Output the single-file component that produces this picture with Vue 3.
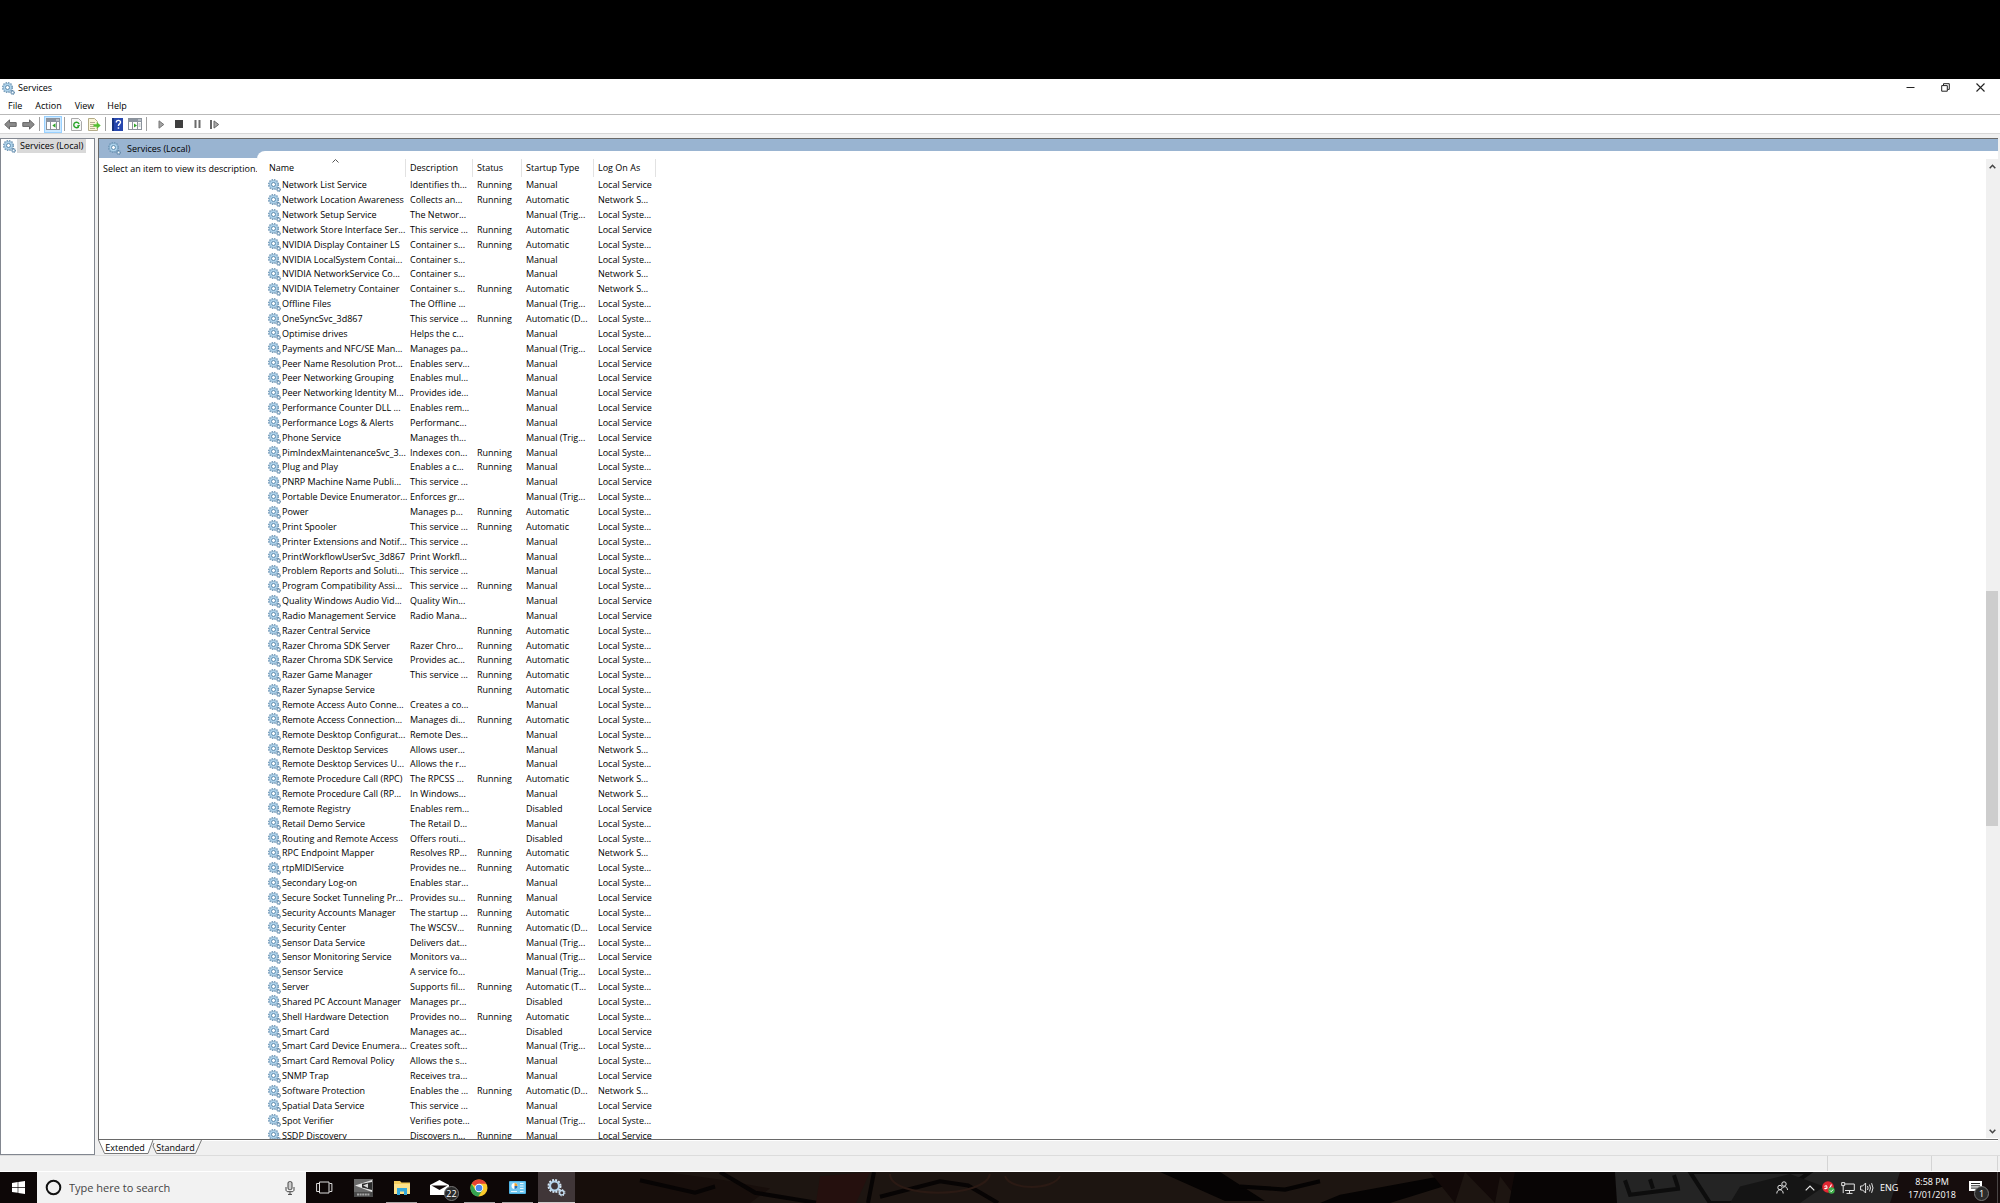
<script setup>
import { ref } from 'vue'

const S = 'Local Service'
const Y = 'Local Syste...'
const N = 'Network S...'
const R = 'Running'
const A = 'Automatic'
const M = 'Manual'
const T = 'Manual (Trig...'

const columns = ['Name', 'Description', 'Status', 'Startup Type', 'Log On As']

const services = [
  ['Network List Service', 'Identifies th...', R, M, S],
  ['Network Location Awareness', 'Collects an...', R, A, N],
  ['Network Setup Service', 'The Networ...', '', T, Y],
  ['Network Store Interface Ser...', 'This service ...', R, A, S],
  ['NVIDIA Display Container LS', 'Container s...', R, A, Y],
  ['NVIDIA LocalSystem Contai...', 'Container s...', '', M, Y],
  ['NVIDIA NetworkService Co...', 'Container s...', '', M, N],
  ['NVIDIA Telemetry Container', 'Container s...', R, A, N],
  ['Offline Files', 'The Offline ...', '', T, Y],
  ['OneSyncSvc_3d867', 'This service ...', R, 'Automatic (D...', Y],
  ['Optimise drives', 'Helps the c...', '', M, Y],
  ['Payments and NFC/SE Man...', 'Manages pa...', '', T, S],
  ['Peer Name Resolution Prot...', 'Enables serv...', '', M, S],
  ['Peer Networking Grouping', 'Enables mul...', '', M, S],
  ['Peer Networking Identity M...', 'Provides ide...', '', M, S],
  ['Performance Counter DLL ...', 'Enables rem...', '', M, S],
  ['Performance Logs & Alerts', 'Performanc...', '', M, S],
  ['Phone Service', 'Manages th...', '', T, S],
  ['PimIndexMaintenanceSvc_3...', 'Indexes con...', R, M, Y],
  ['Plug and Play', 'Enables a c...', R, M, Y],
  ['PNRP Machine Name Publi...', 'This service ...', '', M, S],
  ['Portable Device Enumerator...', 'Enforces gr...', '', T, Y],
  ['Power', 'Manages p...', R, A, Y],
  ['Print Spooler', 'This service ...', R, A, Y],
  ['Printer Extensions and Notif...', 'This service ...', '', M, Y],
  ['PrintWorkflowUserSvc_3d867', 'Print Workfl...', '', M, Y],
  ['Problem Reports and Soluti...', 'This service ...', '', M, Y],
  ['Program Compatibility Assi...', 'This service ...', R, M, Y],
  ['Quality Windows Audio Vid...', 'Quality Win...', '', M, S],
  ['Radio Management Service', 'Radio Mana...', '', M, S],
  ['Razer Central Service', '', R, A, Y],
  ['Razer Chroma SDK Server', 'Razer Chro...', R, A, Y],
  ['Razer Chroma SDK Service', 'Provides ac...', R, A, Y],
  ['Razer Game Manager', 'This service ...', R, A, Y],
  ['Razer Synapse Service', '', R, A, Y],
  ['Remote Access Auto Conne...', 'Creates a co...', '', M, Y],
  ['Remote Access Connection...', 'Manages di...', R, A, Y],
  ['Remote Desktop Configurat...', 'Remote Des...', '', M, Y],
  ['Remote Desktop Services', 'Allows user...', '', M, N],
  ['Remote Desktop Services U...', 'Allows the r...', '', M, Y],
  ['Remote Procedure Call (RPC)', 'The RPCSS ...', R, A, N],
  ['Remote Procedure Call (RP...', 'In Windows...', '', M, N],
  ['Remote Registry', 'Enables rem...', '', 'Disabled', S],
  ['Retail Demo Service', 'The Retail D...', '', M, Y],
  ['Routing and Remote Access', 'Offers routi...', '', 'Disabled', Y],
  ['RPC Endpoint Mapper', 'Resolves RP...', R, A, N],
  ['rtpMIDIService', 'Provides ne...', R, A, Y],
  ['Secondary Log-on', 'Enables star...', '', M, Y],
  ['Secure Socket Tunneling Pr...', 'Provides su...', R, M, S],
  ['Security Accounts Manager', 'The startup ...', R, A, Y],
  ['Security Center', 'The WSCSV...', R, 'Automatic (D...', S],
  ['Sensor Data Service', 'Delivers dat...', '', T, Y],
  ['Sensor Monitoring Service', 'Monitors va...', '', T, S],
  ['Sensor Service', 'A service fo...', '', T, Y],
  ['Server', 'Supports fil...', R, 'Automatic (T...', Y],
  ['Shared PC Account Manager', 'Manages pr...', '', 'Disabled', Y],
  ['Shell Hardware Detection', 'Provides no...', R, A, Y],
  ['Smart Card', 'Manages ac...', '', 'Disabled', S],
  ['Smart Card Device Enumera...', 'Creates soft...', '', T, Y],
  ['Smart Card Removal Policy', 'Allows the s...', '', M, Y],
  ['SNMP Trap', 'Receives tra...', '', M, S],
  ['Software Protection', 'Enables the ...', R, 'Automatic (D...', N],
  ['Spatial Data Service', 'This service ...', '', M, S],
  ['Spot Verifier', 'Verifies pote...', '', T, Y],
  ['SSDP Discovery', 'Discovers n...', R, M, S],
]

const query = ref('')
</script>

<template>
  <div class="screen">
    <svg class="defs" width="0" height="0" aria-hidden="true">
      <symbol id="gears" viewBox="0 0 13 13">
        <circle cx="5.5" cy="5.5" r="4.9" fill="none" stroke="#7299b8" stroke-width="1.3" stroke-dasharray="1.5 1.06" />
        <circle cx="5.5" cy="5.5" r="4.1" fill="#aed3ec" stroke="#7aa3c2" stroke-width=".8" />
        <circle cx="5.5" cy="5.5" r="2" fill="#fff" stroke="#5f8bad" stroke-width="1" />
        <circle cx="10.6" cy="10.4" r="1.8" fill="#a9c8de" stroke="#5d83a3" stroke-width="1.1" stroke-dasharray="1 .4" />
        <circle cx="10.6" cy="10.4" r=".6" fill="#fff" />
      </symbol>
      <symbol id="pane" viewBox="0 0 14 12">
        <rect x=".5" y=".5" width="13" height="11" fill="#fdfdfd" stroke="#8b929b" />
        <path d="M0 1h14v3H0z" fill="#8b949f" />
        <path d="M10 2h3" stroke="#e4e8ec" />
      </symbol>
    </svg>

    <div class="blank"></div>

    <main class="window">
      <header class="titlebar">
        <svg class="gear"><use href="#gears" /></svg>
        <h1>Services</h1>
        <div class="controls">
          <button aria-label="Minimise"><svg width="9" height="9" viewBox="0 0 9 9"><path d="M.5 4.5h8" stroke="#222" /></svg></button>
          <button aria-label="Restore"><svg width="9" height="9" viewBox="0 0 9 9" fill="none" stroke="#222"><path d="M.7 2.6h5.6v5.6H.7zM2.5 2.4V.7h5.8v5.7H6.6" /></svg></button>
          <button aria-label="Close"><svg width="9" height="9" viewBox="0 0 9 9"><path d="M.5.5l8 8M8.500.5l-8 8" stroke="#222" stroke-width="1.100" /></svg></button>
        </div>
      </header>

      <nav class="menu">
        <button>File</button><button>Action</button><button>View</button><button>Help</button>
      </nav>

      <div class="toolbar">
        <button aria-label="Back"><svg width="13" height="11" viewBox="0 0 13 11"><path d="M.7 5.500L5.500.9v2.700h6.700v3.800H5.500v2.700z" fill="#8b8b8b" stroke="#666" /></svg></button>
        <button aria-label="Forward"><svg width="13" height="11" viewBox="0 0 13 11"><path d="M12.300 5.500L7.500.9v2.700H.8v3.800h6.700v2.700z" fill="#8b8b8b" stroke="#666" /></svg></button>
        <i></i>
        <button class="on" aria-label="Show console tree"><svg width="14" height="12" viewBox="0 0 14 12"><use href="#pane" /><path d="M4.500 4v8M10.500 4v8" stroke="#8b929b" /><path d="M9.500 5.300v4.400L6.300 7.500z" fill="#2fa52b" /></svg></button>
        <i></i>
        <button aria-label="Refresh"><svg width="11" height="13" viewBox="0 0 11 13"><path d="M.5.5h7l3 3v9H.5z" fill="#f7f7f7" stroke="#a9a9a9" /><path d="M7.600 8.700A2.700 2.700 0 1 1 8 6" fill="none" stroke="#28a428" stroke-width="1.400" /><path d="M9.400 6.800L5.900 7.400 7.200 9.800z" fill="#28a428" /></svg></button>
        <button aria-label="Export list"><svg width="13" height="13" viewBox="0 0 13 13"><path d="M.5.5h6l3 3v9h-9z" fill="#fbf6d8" stroke="#b3ab87" /><path d="M2 4.500h5M2 6.500h4M2 8.500h4M2 10.500h5" stroke="#a59d7c" stroke-width=".8" /><path d="M5.500 6.300h3.200V4l4 3.500-4 3.500V8.700H5.500z" fill="#55bf32" /></svg></button>
        <i></i>
        <button aria-label="Help"><svg width="11" height="13" viewBox="0 0 11 13"><path d="M0 0h11v13H0z" fill="#2747ae" /><path d="M0 0h2v13H0z" fill="#16317e" /><path d="M4.300 4.500c0-3 4.200-2.700 4.200-.3 0 1.700-2.100 1.700-2.100 3.900" fill="none" stroke="#fff" stroke-width="1.400" /><path d="M5.700 9.300h1.500v1.500H5.700z" fill="#fff" /></svg></button>
        <button aria-label="Show action pane"><svg width="14" height="12" viewBox="0 0 14 12"><use href="#pane" /><path d="M4.500 4v8M9.500 4v8" stroke="#8b929b" /><path d="M6 5.500v4l3-2z" fill="#2fa52b" /><path d="M10.500 6h2M10.500 8h2" stroke="#9aa" /></svg></button>
        <i></i>
        <button class="run" aria-label="Start service"><svg width="7" height="9" viewBox="0 0 7 9"><path d="M1 .8v7.400l4.800-3.700z" fill="#a4a4a4" stroke="#777" /></svg></button>
        <button aria-label="Stop service"><svg width="8" height="8"><path d="M0 0h8v8H0z" fill="#3f3f3f" /></svg></button>
        <button aria-label="Pause service"><svg width="7" height="8"><path d="M.5 0h2v8h-2zM4.500 0h2v8h-2z" fill="#6b6b6b" /></svg></button>
        <button aria-label="Restart service"><svg width="10" height="9" viewBox="0 0 10 9"><path d="M0 0h2v9H0z" fill="#666" /><path d="M4 .9v7.200l4.700-3.600z" fill="#a8a8a8" stroke="#666" /></svg></button>
      </div>

      <div class="panes">
        <aside class="tree">
          <a href="#local"><svg class="gear"><use href="#gears" /></svg><span>Services (Local)</span></a>
        </aside>

        <section class="result">
          <div class="view">
            <div class="detail">
              <h2><svg class="gear"><use href="#gears" /></svg>Services (Local)</h2>
              <p>Select an item to view its description.</p>
            </div>
            <div class="list">
              <table>
                <thead>
                  <tr>
                    <th v-for="(c, i) in columns" :key="c">
                      {{ c }}
                      <svg v-if="i === 0" class="sort" width="7" height="4" viewBox="0 0 7 4"><path d="M.5 3.500l3-3 3 3" fill="none" stroke="#555" /></svg>
                    </th>
                  </tr>
                </thead>
                <tbody>
                  <tr v-for="s in services" :key="s[0]">
                    <td><svg class="gear"><use href="#gears" /></svg>{{ s[0] }}</td>
                    <td>{{ s[1] }}</td>
                    <td>{{ s[2] }}</td>
                    <td>{{ s[3] }}</td>
                    <td>{{ s[4] }}</td>
                  </tr>
                </tbody>
              </table>
              <div class="scroll">
                <button aria-label="Scroll up"><svg width="7" height="5" viewBox="0 0 7 5"><path d="M.7 4.300l2.800-3 2.800 3" fill="none" stroke="#444" stroke-width="1.500" /></svg></button>
                <div class="track"><div class="thumb"></div></div>
                <button aria-label="Scroll down"><svg width="7" height="5" viewBox="0 0 7 5"><path d="M.7.7l2.800 3 2.800-3" fill="none" stroke="#444" stroke-width="1.500" /></svg></button>
              </div>
            </div>
          </div>
          <div class="tabs">
            <button class="first"><svg width="56" height="15" viewBox="0 0 56 15"><path d="M0 0l6 14h44l5-14z" fill="#fff" /><path d="M.5 0l6 13.500h43.500L55 0" fill="none" stroke="#777" /></svg><span>Extended</span></button>
            <button><svg width="50" height="15" viewBox="0 0 50 15"><path d="M1.500.5h48l-6 13h-39L1.500 6z" fill="#f6f6f6" /><path d="M2 3L1 6l3.500 7.500h39l6-13.500" fill="none" stroke="#777" /></svg><span>Standard</span></button>
          </div>
        </section>
      </div>

      <footer class="status"><span class="message"></span><span class="mid"></span><span class="end"></span></footer>
    </main>

    <div class="taskbar">
      <svg class="wallpaper" viewBox="0 0 2000 30" preserveAspectRatio="none" aria-hidden="true">
        <path d="M0 0h2000v30H0z" fill="#0d0707" />
        <path d="M575 0h1045v30H575z" fill="#1d1511" />
        <path d="M575 0h90l60 8 45 8-20 14H575z" fill="#170e0b" />
        <path d="M640 8l55 12 20-6M720 0l35 20 63 10M868 30l6-30M880 24l60-15 28 4 30 17" fill="none" stroke="#070404" stroke-width="4" />
        <path d="M820 4l50-4-14 30h-40z" fill="#25100e" />
        <path d="M890 2c0 24 95 24 100 0M1005 4c5 14 48 14 55 0" fill="none" stroke="#2b1a14" stroke-width="2" />
        <path d="M1160 0h60l45 28h-40zM1340 22l95-17 25-5v9l-70 21h-70z" fill="#050303" />
        <path d="M1240 14l45 3 35-8" fill="none" stroke="#050303" stroke-width="4" />
        <path d="M1430 0l25 30 10-30 30 30 5-26 20 26 8-30z" fill="#120908" />
        <path d="M1515 0h100l6 30h-112z" fill="#080505" />
        <path d="M1615 0h300l-15 30h-283z" fill="#242424" />
        <path d="M1625 8l5 14 50-6M1650 7l3 9M1674 3l4 12M1690 0l20 30h35l45-16 20-14z" fill="none" stroke="#0d0d0d" stroke-width="4" />
        <path d="M1740 14l50-12 34 12-24 16h-70z" fill="#151515" />
        <path d="M1900 0h100v30h-110z" fill="#160d0d" />
      </svg>

      <button class="start" aria-label="Start"><svg width="13" height="13" viewBox="0 0 13 13"><path d="M0 1.900l5.700-.8v5H0zM6.300 1L13 0v6.100H6.300zM0 6.800h5.700v5L0 11zM6.300 6.800H13V13l-6.700-.9z" fill="#fff" /></svg></button>

      <label class="search">
        <svg width="17" height="17" viewBox="0 0 17 17"><circle cx="8.500" cy="8.500" r="6.800" fill="none" stroke="#111" stroke-width="2" /></svg>
        <input v-model="query" type="text" aria-label="Search" placeholder="Type here to search">
        <svg width="10" height="14" viewBox="0 0 10 14" fill="none" stroke="#444"><rect x="3" y=".6" width="4" height="8" rx="1.500" fill="#ccc" /><path d="M1 6v3c0 1 1 1.700 2 1.700h4c1 0 2-.7 2-1.700V6M5 11v2.500M3 13.400h4" /></svg>
      </label>

      <div class="apps">
        <button aria-label="Task view"><svg width="17" height="13" viewBox="0 0 17 13" fill="none" stroke="#ddd"><path d="M3.500 1h9.500v11H3.500zM3 2.500H.6v8H3M13.500 2.500h2.400v8h-2.400" /></svg></button>
        <button aria-label="Audio tool"><svg width="19" height="18" viewBox="0 0 19 18"><path d="M0 0h19v18H0z" fill="#4a4a4a" /><path d="M0 0h19v13H0z" fill="#6a6a6a" /><path d="M1 6.500L18 1v12z" fill="#e4e4e4" /><path d="M8 4.800L18 3v8L8 8.500z" fill="#2c2c2c" /><path d="M9 6.600l5-2.200v4.600z" fill="#d8d8d8" /><path d="M3 15.500h13" stroke="#a8a8a8" stroke-width="2" stroke-dasharray="2 .6" /></svg></button>
        <button class="open" aria-label="File Explorer"><svg width="18" height="15" viewBox="0 0 18 15"><path d="M1 1h6l1.500 1.500H17V14H1z" fill="#f4cd5c" /><path d="M1 4h16v10H1z" fill="#fce28b" /><path d="M4 15V8h10v7h-3v-3.500H7V15z" fill="#35a9dc" /></svg></button>
        <button aria-label="Mail">
          <svg width="20" height="15" viewBox="0 0 20 15"><path d="M0 5L9.500 0 19 5v10H0z" fill="#fff" /><path d="M1.500 5.500h16L9.500 10z" fill="#100808" /></svg>
          <span class="badge">22</span>
        </button>
        <button class="open" aria-label="Chrome"><svg width="18" height="18" viewBox="0 0 18 18"><circle cx="9" cy="9" r="8.500" fill="#fbc92b" /><path d="M9 9L1.600 4.700A8.500 8.500 0 0 1 16.400 4.800H9z" fill="#e54234" /><path d="M1.600 4.700A8.500 8.500 0 0 0 8.300 17.500L12.600 11 9 9 5.400 11z" fill="#34a350" /><circle cx="9" cy="9" r="4.200" fill="#fff" /><circle cx="9" cy="9" r="3.300" fill="#4787ee" /></svg></button>
        <button class="open" aria-label="Control Panel"><svg width="17" height="13" viewBox="0 0 17 13"><rect width="17" height="13" rx="1" fill="#4fb4e6" /><path d="M1 1h15v11H1z" fill="#74c8f0" /><circle cx="5.500" cy="5" r="3" fill="#fff" /><path d="M5.500 5V2a3 3 0 0 1 3 3z" fill="#f0a22c" /><path d="M5.500 5h3a3 3 0 0 1-3 3z" fill="#256fb5" /><path d="M11 2.500h3.500M11 5h3.500M11 7.500h3.500M2 10.500h6M11 10.500h3.500" stroke="#e8f7ff" /></svg></button>
        <button class="open active" aria-label="Services"><svg width="19" height="18" viewBox="0 0 19 18" fill="none"><circle cx="7.500" cy="7" r="6" stroke="#d8e9f6" stroke-width="2" stroke-dasharray="1.900 1.240" /><circle cx="7.500" cy="7" r="4.500" stroke="#b5d4ec" stroke-width="2.200" /><circle cx="14.800" cy="13.700" r="2.200" stroke="#c4def2" stroke-width="1.400" /><circle cx="14.800" cy="13.700" r="3.200" stroke="#d8e9f6" stroke-dasharray="1.200 1.310" /></svg></button>
      </div>

      <div class="tray">
        <button class="people" aria-label="People"><svg width="12" height="13" viewBox="0 0 12 13" fill="none" stroke="#e4e4e4"><circle cx="8" cy="3" r="2.200" /><circle cx="4" cy="6.500" r="2.200" /><path d="M.8 12.500c0-5 6.400-5 6.400 0M7 6.500c2.500-2 4.400 0 4.500 2.500" /></svg></button>
        <button aria-label="Hidden icons"><svg width="10" height="6" viewBox="0 0 10 6"><path d="M.7 5.300L5 1l4.300 4.300" fill="none" stroke="#e8e8e8" stroke-width="1.200" /></svg></button>
        <button aria-label="Antivirus"><svg width="13" height="13" viewBox="0 0 13 13"><circle cx="6" cy="6" r="5.800" fill="#e12632" /><path d="M2.500 5.500c2-1.500 2.500-.5 2.500 1.500-3 0-3 1.500 0 0M7 8.500l2.500-5" fill="none" stroke="#fff" stroke-width="1.100" /><circle cx="9.500" cy="9.500" r="3.200" fill="#3fae49" /><path d="M8 9.500l1.200 1.200 1.900-2.200" fill="none" stroke="#fff" /></svg></button>
        <button aria-label="Network"><svg width="14" height="12" viewBox="0 0 14 12" fill="none" stroke="#e4e4e4"><path d="M4 2h9.300v6.500H4M8.500 8.500v2.800M5.500 11.400h6M.7.600h3v3h-3zM2.200 3.600v7.500" /></svg></button>
        <button aria-label="Volume"><svg width="14" height="12" viewBox="0 0 14 12" fill="none" stroke="#e4e4e4"><path d="M.6 4h2l3-3v10l-3-3h-2zM7.500 4q1.200 2 0 4M9.500 2.600q2 3.400 0 6.800M11.600 1.200q2.800 4.800 0 9.600" /></svg></button>
        <span class="lang">ENG</span>
        <time><span>8:58 PM</span><span>17/01/2018</span></time>
        <button class="notify" aria-label="Notifications">
          <svg width="13" height="13" viewBox="0 0 13 13"><path d="M0 0h13v10H8.500L6 13v-3H0z" fill="#fff" /><path d="M2 2.500h9M2 4.800h9M2 7.100h6" stroke="#222" /></svg>
          <span class="badge">1</span>
        </button>
      </div>
    </div>
  </div>
</template>

<style>
body { background: #000; }
</style>

<style scoped>
.screen {
  display: flex;
  flex-direction: column;
  height: 100vh;
  overflow: hidden;
  font: 9px/14px "Open Sans", "Noto Sans", sans-serif;
  color: #000;
}
.defs { position: absolute; }
svg { display: block; flex: none; }
.gear { width: 13px; height: 13px; }
button {
  position: relative;
  display: flex;
  align-items: center;
  justify-content: center;
  padding: 0;
  border: 0;
  background: none;
  font: inherit;
  color: inherit;
}
h1, h2, p { margin: 0; font: inherit; }

.blank { flex: none; height: 79px; }
.window {
  flex: 1;
  min-height: 0;
  display: flex;
  flex-direction: column;
  background: #f0f0f0;
}

.titlebar { display: flex; align-items: center; gap: 3px; height: 18px; padding-left: 2px; background: #fff; }
.controls { display: flex; align-self: flex-start; height: 16px; margin: 0 2px 0 auto; }
.controls button { width: 35px; }

.menu { display: flex; height: 17px; padding-left: 8px; gap: 13px; background: #fff; border-bottom: 1px solid #b9b9b9; }

.toolbar { display: flex; align-items: center; height: 18px; padding-left: 1px; background: #fff; border-bottom: 1px solid #d8d8d8; }
.toolbar button { width: 18px; height: 17px; }
.toolbar .run { margin-left: 3px; }
.toolbar .on { margin-left: 2px; background: #cce8ff; outline: 1px solid #99d1ff; outline-offset: -1px; }
.toolbar i { width: 1px; height: 14px; margin: 0 2px; background: #a0a0a0; }

.panes { flex: 1; min-height: 0; display: flex; gap: 3px; padding: 4px 2px 0 0; }
.tree { flex: none; width: 95px; box-sizing: border-box; border: 1px solid #828790; background: #fff; }
.tree a { display: flex; align-items: center; gap: 1px; margin: 0 8px 0 2px; height: 14px; color: inherit; text-decoration: none; }
.tree span { flex: 1; padding-left: 3px; background: #d9d9d9; }

.result { flex: 1; min-width: 0; display: flex; flex-direction: column; }
.view {
  flex: 1;
  min-height: 0;
  display: flex;
  border: 1px solid #696969;
  border-width: 1px 0 1px 1px;
  background: #99b4d1;
}
.detail { flex: none; width: 158px; display: flex; flex-direction: column; }
.detail h2 { display: flex; align-items: center; gap: 6px; height: 19px; padding-left: 9px; }
.detail p { flex: 1; padding: 4px 0 0 4px; background: #fff; white-space: nowrap; }
.list {
  flex: 1;
  min-width: 0;
  display: flex;
  justify-content: space-between;
  margin-top: 12px;
  padding: 8px 0 1px 11px;
  overflow: hidden;
  border-top-left-radius: 8px;
  background: #fff;
}
table { display: flex; flex-direction: column; }
thead { padding-bottom: 1px; display: block; }
tr { display: grid; grid-template-columns: 138px 67px 49px 72px 62px; align-items: center; }
tbody { flex: 1; display: grid; grid-auto-rows: 1fr; margin-bottom: -5px; }
th, td { padding: 0 0 0 4px; white-space: nowrap; text-align: left; font-weight: 400; }
th { position: relative; height: 18px; line-height: 18px; border-right: 1px solid #e2e2e2; }
th:first-child { padding-left: 1px; }
td:first-child { display: flex; align-items: center; gap: 1px; padding: 0; }
.sort { position: absolute; left: 64px; top: 0; }

.scroll { display: flex; flex-direction: column; width: 12px; background: #f0f0f0; }
.scroll button { height: 14px; width: 12px; }
.track { flex: 1; display: flex; flex-direction: column; }
.track::before { content: ""; flex: 418; }
.thumb { flex: 236; background: #cdcdcd; }
.track::after { content: ""; flex: 298; }

.tabs { display: flex; height: 14px; border-top: 1px solid #fff; }
.tabs button { width: 47px; }
.tabs button.first { width: 54px; }
.tabs button svg { position: absolute; left: 0; top: -1px; }
.tabs span { position: relative; }

.status { display: flex; height: 15px; border-top: 1px solid #dcdcdc; border-bottom: 1px solid #fff; }
.status span { border-right: 1px solid #d4d4d4; }
.message { flex: 1; }
.mid { width: 103px; }
.end { width: 65px; margin-right: 2px; }

.taskbar { position: relative; flex: none; display: flex; height: 31px; color: #fff; }
.wallpaper { position: absolute; inset: 0; width: 100%; height: 100%; }
.start { width: 37px; }
.search { position: relative; display: flex; align-items: center; gap: 7px; width: 269px; box-sizing: border-box; padding: 0 11px 0 8px; background: #f2f2f2; }
.search input { flex: 1; min-width: 0; padding: 0; border: 0; outline: 0; background: none; font: 11px/16px "Open Sans", sans-serif; color: #333; }
.search input::placeholder { color: #444; opacity: 1; }
.apps { display: flex; justify-content: space-between; width: 269px; }
.apps button { width: 37px; }
.apps .open::after { content: ""; position: absolute; left: 3px; right: 3px; bottom: 0; height: 1px; background: #a9a5a5; }
.apps .active { background: #403638; }
.apps .active::after { left: 0; right: 0; background: #d0cccc; }
.badge {
  position: absolute;
  right: 0;
  bottom: 2px;
  display: flex;
  align-items: center;
  justify-content: center;
  width: 15px;
  height: 15px;
  box-sizing: border-box;
  border: 1px solid #777;
  border-radius: 50%;
  background: #2b2b2b;
}
.tray { position: relative; display: flex; align-items: center; margin-left: auto; }
.tray button { width: 19px; height: 100%; }
.tray .people { margin-right: 9px; }
.lang { width: 18px; margin-left: 4px; }
.tray time { display: flex; flex-direction: column; align-items: center; width: 68px; line-height: 13px; }
.tray .notify { box-sizing: content-box; width: 18px; margin-right: 2px; padding-right: 13px; border-right: 1px solid #4a4545; }
.tray .badge { right: 8px; }
</style>
